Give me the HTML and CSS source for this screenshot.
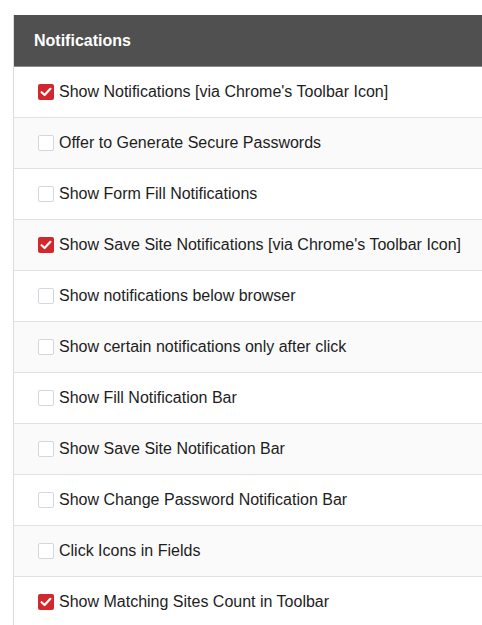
FILE: index.html
```html
<!DOCTYPE html>
<html>
<head>
<meta charset="utf-8">
<link rel="stylesheet" href="styles.css">
</head>
<body>
<div class="panel">
  <div class="header">Notifications</div>
  <div class="row"><span class="box checked"><svg viewBox="0 0 16 16" width="16" height="16"><path d="M3.6 8.2 L6.6 11 L12.4 4.8" fill="none" stroke="#fff" stroke-width="2.2" stroke-linecap="round" stroke-linejoin="round"/></svg></span><span class="label">Show Notifications [via Chrome's Toolbar Icon]</span></div>
  <div class="row"><span class="box"></span><span class="label">Offer to Generate Secure Passwords</span></div>
  <div class="row"><span class="box"></span><span class="label">Show Form Fill Notifications</span></div>
  <div class="row"><span class="box checked"><svg viewBox="0 0 16 16" width="16" height="16"><path d="M3.6 8.2 L6.6 11 L12.4 4.8" fill="none" stroke="#fff" stroke-width="2.2" stroke-linecap="round" stroke-linejoin="round"/></svg></span><span class="label">Show Save Site Notifications [via Chrome's Toolbar Icon]</span></div>
  <div class="row"><span class="box"></span><span class="label">Show notifications below browser</span></div>
  <div class="row"><span class="box"></span><span class="label">Show certain notifications only after click</span></div>
  <div class="row"><span class="box"></span><span class="label">Show Fill Notification Bar</span></div>
  <div class="row"><span class="box"></span><span class="label">Show Save Site Notification Bar</span></div>
  <div class="row"><span class="box"></span><span class="label">Show Change Password Notification Bar</span></div>
  <div class="row"><span class="box"></span><span class="label">Click Icons in Fields</span></div>
  <div class="row"><span class="box checked"><svg viewBox="0 0 16 16" width="16" height="16"><path d="M3.6 8.2 L6.6 11 L12.4 4.8" fill="none" stroke="#fff" stroke-width="2.2" stroke-linecap="round" stroke-linejoin="round"/></svg></span><span class="label">Show Matching Sites Count in Toolbar</span></div>
</div>
</body>
</html>
```
FILE: styles.css
```css
html, body {
  margin: 0;
  padding: 0;
  background: #fff;
}
body {
  padding: 15px 0 0 13px;
  font-family: "Liberation Sans", Arial, Helvetica, sans-serif;
  overflow: hidden;
}
.panel {
  border-left: 1px solid #dcdcdc;
}
.header {
  height: 51px;
  background: #505050;
  color: #fff;
  font-weight: bold;
  font-size: 16px;
  display: flex;
  align-items: center;
  padding-left: 20px;
  border-bottom: 1px solid #8a8a8a;
}
.row {
  height: 50px;
  display: flex;
  align-items: center;
  padding-left: 24px;
  border-bottom: 1px solid #e2e2e2;
  background: #fff;
}
.row:nth-child(odd) {
  background: #fafafa;
}
.box {
  width: 16px;
  height: 16px;
  box-sizing: border-box;
  border: 1.5px solid #d3d7de;
  border-radius: 2px;
  background: #fff;
  margin-right: 5px;
  flex: none;
  display: flex;
}
.box.checked {
  border: none;
  background: #d3272e;
  border-radius: 2px;
}
.label {
  font-size: 16px;
  color: #1d1d1d;
  white-space: nowrap;
}
```
